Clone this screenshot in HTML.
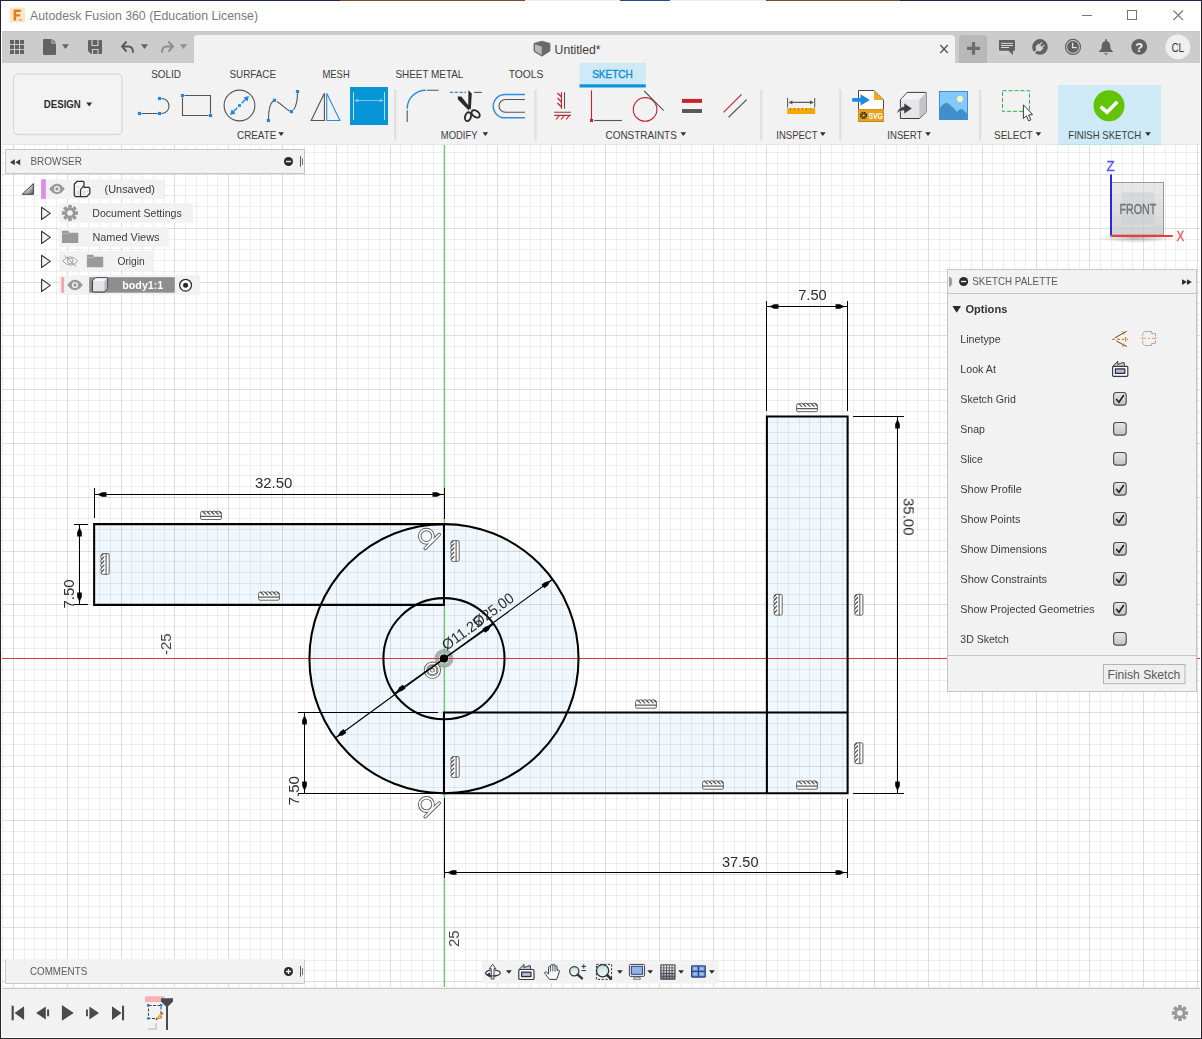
<!DOCTYPE html>
<html><head><meta charset="utf-8"><title>Autodesk Fusion 360 (Education License)</title>
<style>
html,body{margin:0;padding:0;background:#2b2230;overflow:hidden}
svg{display:block;font-family:"Liberation Sans",sans-serif}
text{white-space:pre}
</style></head><body>
<svg width="1202" height="1039" viewBox="0 0 1202 1039">
<rect x="0" y="0" width="1202" height="1039" fill="#2a2130"/>
<rect x="0" y="0" width="1202" height="1" fill="#1e2740"/><rect x="340" y="0" width="185" height="1" fill="#7a4a34"/><rect x="525" y="0" width="95" height="1" fill="#eeeeee"/><rect x="620" y="0" width="50" height="1" fill="#1f4f90"/><rect x="670" y="0" width="96" height="1" fill="#eeeeee"/><rect x="766" y="0" width="134" height="1" fill="#7a4a34"/>
<rect x="1" y="1" width="1200" height="1037" fill="#f2f2f2"/>
<g id="titlebar">
<rect x="1" y="1" width="1200" height="30" fill="#ffffff"/>
<rect x="9.5" y="7.5" width="15.5" height="15" fill="#fde6cc"/>
<path d="M13.6 9.6h7.2v2.4h-4.6v2.3h3.9v2.3h-3.9v4h-2.6z" fill="#e57f1c"/>
<rect x="18.6" y="19.2" width="3.6" height="1.5" fill="#f0a860"/>
<text x="30" y="20" font-size="13" fill="#7a7a7a" textLength="228" lengthAdjust="spacingAndGlyphs" >Autodesk Fusion 360 (Education License)</text>
<path d="M1082 15.5H1092" stroke="#777" stroke-width="1"/>
<rect x="1127.5" y="10.5" width="9" height="9" fill="none" stroke="#777" stroke-width="1"/>
<path d="M1173.5 10.5L1183 20M1183 10.5L1173.5 20" stroke="#777" stroke-width="1.1"/>
</g>
<g id="qat">
<rect x="1" y="31" width="1200" height="32" fill="#cccccc"/><rect x="1" y="31" width="1200" height="1" fill="#c7c7c7"/>
<path d="M194 63V38.5a3.5 3.5 0 0 1 3.5-3.5H951.5a3.5 3.5 0 0 1 3.5 3.5V63z" fill="#f2f2f2"/>
<path d="M10 40h4v4h-4zM10 45h4v4h-4zM10 50h4v4h-4zM15 40h4v4h-4zM15 45h4v4h-4zM15 50h4v4h-4zM20 40h4v4h-4zM20 45h4v4h-4zM20 50h4v4h-4z" fill="#626262"/>
<path d="M44 39h7.5v4.5h4.5V54a1 1 0 0 1 -1 1H44a1 1 0 0 1 -1 -1V40a1 1 0 0 1 1 -1zM52.5 39.3L55.8 42.6H52.5z" fill="#626262"/>
<path d="M62 44.3h7l-3.5 4.6z" fill="#626262"/>
<path d="M89 40h12a1 1 0 0 1 1 1v12a1 1 0 0 1 -1 1H91l-3-3V41a1 1 0 0 1 1 -1z" fill="#626262"/>
<path d="M92 40v5.5h6V40M92.5 54v-4.5h5.5V54" stroke="#cccccc" stroke-width="1.2" fill="none"/>
<path d="M126.5 41.5L122 46.5L126.5 51.5M122.5 46.5H128.5Q133 46.5 133 52.8" stroke="#5a5a5a" stroke-width="1.9" fill="none"/>
<path d="M141 44.3h7l-3.5 4.6z" fill="#626262"/>
<path d="M168.5 41.5L173 46.5L168.5 51.5M172.5 46.5H166.5Q162 46.5 162 52.8" stroke="#8e8e8e" stroke-width="1.9" fill="none"/>
<path d="M180 44.3h7l-3.5 4.6z" fill="#8e8e8e"/>
<path d="M534 43.4L541.9 41.2L550 43.4V51L541.9 56.2L534 51.4z" fill="#696969" stroke="#696969" stroke-width="0.8" stroke-linejoin="round"/>
<path d="M535 44.3L541.7 46.5V55L535 50.9z" fill="#b8b8b8"/>
<text x="554.6" y="54" font-size="12.5" fill="#3c3c3c" textLength="46" lengthAdjust="spacingAndGlyphs" >Untitled*</text>
<path d="M940.3 45L947.8 53M947.8 45L940.3 53" stroke="#555" stroke-width="1.3"/>
<path d="M959 63V39a4 4 0 0 1 4-4H983a4 4 0 0 1 4 4V63z" fill="#b8b8b8"/>
<path d="M967 48.4H980M973.5 42V54.8" stroke="#6e6e6e" stroke-width="3.2"/>
<path d="M999 51.6h9v3.4h-9z" fill="#d2d2d2"/>
<path d="M1000 40h14a1 1 0 0 1 1 1V49.8a1 1 0 0 1 -1 1h-1v4.2L1008.6 50.8H1000a1 1 0 0 1 -1 -1V41a1 1 0 0 1 1 -1z" fill="#606060"/>
<path d="M1001 43.4H1013M1001 45.5H1013M1001 47.5H1009" stroke="#dadada" stroke-width="1"/>
<circle cx="1040" cy="46.9" r="7.8" fill="#606060"/>
<g transform="translate(1040 46.9) rotate(-45)" fill="#cfcfcf" stroke="none"><path d="M1.4 -3.4V3.4H-1.2A3.4 3.4 0 0 1 -1.2 -3.4z"/><rect x="1" y="-2.3" width="3.6" height="1.2"/><rect x="1" y="1.1" width="3.6" height="1.2"/><rect x="-9" y="-0.7" width="5" height="1.4"/></g>
<circle cx="1073" cy="46.9" r="7.5" fill="none" stroke="#606060" stroke-width="1.2"/>
<circle cx="1073" cy="46.9" r="5.9" fill="#606060"/>
<path d="M1072.6 42.8V47.6H1076.8" stroke="#e2e2e2" stroke-width="1.3" fill="none"/>
<path d="M1105.2 39.2h1.6v1.7c2.5 0.6 3.5 2.7 3.5 5.2 0 2.6 0.7 4 2.7 5.3v0.6h-14v-0.6c2-1.3 2.7-2.7 2.7-5.3 0-2.5 1-4.6 3.5-5.2zM1103.8 53.2h4.4l-2.2 1.8z" fill="#606060"/>
<circle cx="1139.2" cy="46.9" r="7.9" fill="#606060"/>
<text x="1139.2" y="51.6" font-size="13" font-weight="bold" fill="#f2f2f2" text-anchor="middle">?</text>
<circle cx="1177.9" cy="46.9" r="12.4" fill="#efefef"/>
<text x="1171.4" y="52" font-size="12.5" fill="#3a3a3a" textLength="12.8" lengthAdjust="spacingAndGlyphs" >CL</text>
</g>
<g id="toolbar">
<text x="151.2" y="78.2" font-size="11" fill="#3c3c3c" textLength="29.8" lengthAdjust="spacingAndGlyphs" >SOLID</text>
<text x="229.5" y="78.2" font-size="11" fill="#3c3c3c" textLength="46.5" lengthAdjust="spacingAndGlyphs" >SURFACE</text>
<text x="322.5" y="78.2" font-size="11" fill="#3c3c3c" textLength="27.2" lengthAdjust="spacingAndGlyphs" >MESH</text>
<text x="395.5" y="78.2" font-size="11" fill="#3c3c3c" textLength="67.8" lengthAdjust="spacingAndGlyphs" >SHEET METAL</text>
<text x="508.7" y="78.2" font-size="11" fill="#3c3c3c" textLength="34.8" lengthAdjust="spacingAndGlyphs" >TOOLS</text>
<rect x="579.5" y="63" width="66.3" height="21.5" fill="#cdeaf6"/>
<rect x="579.5" y="84.3" width="66.3" height="3.2" fill="#0a94d8"/>
<text x="592.2" y="78.1" font-size="11" fill="#0a8ad6" textLength="40.6" lengthAdjust="spacingAndGlyphs" stroke="#0a8ad6" stroke-width="0.35">SKETCH</text>
<rect x="13.5" y="74" width="108.5" height="60.5" rx="4.5" fill="#f3f3f3" stroke="#dadada" stroke-width="1.3"/>
<text x="43.8" y="108.3" font-size="11" fill="#2e2e2e" textLength="37" lengthAdjust="spacingAndGlyphs" font-weight="bold" >DESIGN</text>
<path d="M86.3 102.6h5.8l-2.9 3.8z" fill="#2e2e2e"/>
<text x="237" y="138.8" font-size="11" fill="#3c3c3c" textLength="39.3" lengthAdjust="spacingAndGlyphs" >CREATE</text>
<path d="M278.3 132.3h5.6l-2.8 3.8z" fill="#2e2e2e"/>
<text x="440.8" y="138.8" font-size="11" fill="#3c3c3c" textLength="36.8" lengthAdjust="spacingAndGlyphs" >MODIFY</text>
<path d="M482.6 132.3h5.6l-2.8 3.8z" fill="#2e2e2e"/>
<text x="605.5" y="138.8" font-size="11" fill="#3c3c3c" textLength="71.3" lengthAdjust="spacingAndGlyphs" >CONSTRAINTS</text>
<path d="M680.5 132.3h5.6l-2.8 3.8z" fill="#2e2e2e"/>
<text x="776.3" y="138.8" font-size="11" fill="#3c3c3c" textLength="41.2" lengthAdjust="spacingAndGlyphs" >INSPECT</text>
<path d="M820 132.3h5.6l-2.8 3.8z" fill="#2e2e2e"/>
<text x="887.3" y="138.8" font-size="11" fill="#3c3c3c" textLength="35" lengthAdjust="spacingAndGlyphs" >INSERT</text>
<path d="M925.2 132.3h5.6l-2.8 3.8z" fill="#2e2e2e"/>
<text x="994" y="138.8" font-size="11" fill="#3c3c3c" textLength="38.7" lengthAdjust="spacingAndGlyphs" >SELECT</text>
<path d="M1035.6 132.3h5.6l-2.8 3.8z" fill="#2e2e2e"/>
<rect x="1058" y="85" width="103" height="60" fill="#cdeaf6"/>
<text x="1068.3" y="138.8" font-size="11" fill="#3c3c3c" textLength="72.8" lengthAdjust="spacingAndGlyphs" >FINISH SKETCH</text>
<path d="M1145.2 132.3h5.6l-2.8 3.8z" fill="#2e2e2e"/>
<rect x="394.3" y="89.5" width="2" height="51" fill="#dedede"/>
<rect x="534.6" y="89.5" width="2" height="51" fill="#dedede"/>
<rect x="760.3" y="89.5" width="2" height="51" fill="#dedede"/>
<rect x="839.3" y="89.5" width="2" height="51" fill="#dedede"/>
<rect x="979.2" y="89.5" width="2" height="51" fill="#dedede"/>
<path d="M141.5 113.5H157.5M161.5 98.5A7.5 7.5 0 0 1 161.5 113.5" stroke="#555555" stroke-width="1.1" fill="none"/>
<rect x="137.9" y="111.9" width="3.2" height="3.2" fill="#1e88e5"/><rect x="157.9" y="111.9" width="3.2" height="3.2" fill="#1e88e5"/><rect x="157.9" y="96.9" width="3.2" height="3.2" fill="#1e88e5"/>
<path d="M184.5 95.5H210.5V113.5M208.5 115.5H182.5V97.5" stroke="#555555" stroke-width="1.1" fill="none"/>
<rect x="180.9" y="93.9" width="3.2" height="3.2" fill="#1e88e5"/><rect x="208.9" y="113.9" width="3.2" height="3.2" fill="#1e88e5"/>
<circle cx="239.5" cy="105.5" r="15.4" stroke="#555555" stroke-width="1.1" fill="none"/>
<path d="M232.5 112.5L237.3 107.7M241.7 103.3L246.5 98.5" stroke="#1e88e5" stroke-width="1.4"/>
<path d="M230.2 115.1L231.6 109.6L235.6 113.6zM248.9 96L247.5 101.5L243.5 97.5z" fill="#1e88e5"/>
<rect x="238.1" y="104.1" width="2.8" height="2.8" fill="#1e88e5"/>
<path d="M268.4 119C268.6 110 270 103.5 273 101.2M277 101.5C282 104.5 285.5 109 289.6 111M293.5 110C296.3 106 297.4 100 297.5 93.5" stroke="#555555" stroke-width="1.1" fill="none"/>
<rect x="266.79999999999995" y="118.9" width="3.2" height="3.2" fill="#1e88e5"/><rect x="272.9" y="98.7" width="3.2" height="3.2" fill="#1e88e5"/><rect x="289.79999999999995" y="110.0" width="3.2" height="3.2" fill="#1e88e5"/><rect x="295.9" y="90.0" width="3.2" height="3.2" fill="#1e88e5"/>
<path d="M324.4 93.2V120.5H311.2z" stroke="#555555" stroke-width="1.1" fill="none"/>
<path d="M326.7 93.2V120.5H339.9z" stroke="#2a8de0" stroke-width="1.1" fill="none"/>
<rect x="350" y="87" width="38" height="38" fill="#0696d7"/>
<path d="M353.5 92V120M384.5 92V120" stroke="#b6dcf2" stroke-width="1"/>
<path d="M356 100.5H382" stroke="#7cc6ee" stroke-width="1"/>
<path d="M354.2 100.5L358.2 98.5V102.5zM383.8 100.5L379.8 98.5V102.5z" fill="#7cc6ee"/>
<path d="M407.2 108.7A18.6 18.6 0 0 1 425.8 90.2" stroke="#2a8de0" stroke-width="1.4" fill="none"/>
<path d="M407.2 110.2V121.9M427 90.2H438.7" stroke="#555555" stroke-width="1.1" fill="none"/>
<path d="M450 92.4H466" stroke="#2a8de0" stroke-width="1.2" stroke-dasharray="3.2 1.6" fill="none"/>
<path d="M474.2 92.4H481.8" stroke="#555555" stroke-width="1.1" fill="none"/>
<path d="M468.4 90.3L471.8 93.6L470.8 109.5L468.2 110.5zM457.8 96.6L461.4 96.6L470.6 108.2L469 110.8L457.9 99.6z" fill="#2a2a2a"/>
<ellipse cx="468" cy="116.7" rx="2.9" ry="4.5" transform="rotate(15 468 116.7)" fill="none" stroke="#2a2a2a" stroke-width="1.9"/>
<ellipse cx="475.7" cy="113.9" rx="2.9" ry="4.6" transform="rotate(-52 475.7 113.9)" fill="none" stroke="#2a2a2a" stroke-width="1.9"/>
<circle cx="469.6" cy="110" r="1" fill="#f2f2f2"/>
<path d="M524.9 94.5H504.9A11.65 11.65 0 0 0 504.9 117.8H524.9" stroke="#2a8de0" stroke-width="1.4" fill="none"/>
<path d="M524.9 99.5H505.4A6.4 6.4 0 0 0 505.4 112.3H524.9" stroke="#555555" stroke-width="1.1" fill="none"/>
<path d="M564.5 92.2V108.8M554.2 112.3H570.9" stroke="#555555" stroke-width="1.1" fill="none"/>
<path d="M561.5 92.2V108.8M561.5 97L557.5 93M561.5 102L557.5 98M561.5 107L557.5 103M554.2 115.4H570.9M559.5 115.4L556 119.5M564.5 115.4L561 119.5M569.5 115.4L566 119.5" stroke="#cc2229" stroke-width="1.1" fill="none"/>
<path d="M591.5 90.4V119" stroke="#cc2229" stroke-width="1.1"/>
<rect x="590.0" y="119.0" width="3.0" height="3.0" fill="#cc2229"/>
<path d="M594.2 120.5H621.9" stroke="#555555" stroke-width="1.1"/>
<circle cx="645.1" cy="109.4" r="11.8" stroke="#cc2229" stroke-width="1.1" fill="none"/>
<path d="M644.2 91L663.7 110.6" stroke="#555555" stroke-width="1.1"/>
<rect x="681.5" y="98.4" width="21" height="5" fill="#fafafa"/><rect x="681.5" y="108.5" width="21" height="5" fill="#fafafa"/>
<rect x="682" y="98.9" width="20" height="4" fill="#cc2229"/><rect x="682" y="109" width="20" height="4" fill="#5a5a5a"/>
<path d="M723.5 112.4L741.6 94.4" stroke="#cc2229" stroke-width="1.2"/>
<path d="M728.6 117.3L746.6 99.6" stroke="#555555" stroke-width="1.2"/>
<rect x="787.2" y="108.2" width="27.9" height="5.8" fill="#f9a800"/>
<path d="M790.5 108.2v2.2M794.5 108.2v1.6M798.5 108.2v2.2M802.5 108.2v1.6M806.5 108.2v2.2M810.5 108.2v1.6" stroke="#8a6a10" stroke-width="0.8"/>
<path d="M787.6 98V107.4M814.7 98V107.4M790 102.4H812.4" stroke="#5c5c5c" stroke-width="1.1"/>
<path d="M788.4 102.4L792.4 100.2V104.6zM813.9 102.4L809.9 100.2V104.6z" fill="#5c5c5c"/>
<path d="M858.5 90.5H874L883.5 100V121.5H858.5z" fill="#fff" stroke="#4a4a4a" stroke-width="1"/>
<path d="M874 90.5V100H883.5z" fill="#f0a820"/>
<rect x="858" y="109" width="26" height="12.7" fill="#e8a21a"/>
<rect x="858.4" y="109.4" width="25.2" height="11.9" fill="none" stroke="#c98a10" stroke-width="0.6"/>
<circle cx="863.6" cy="115.4" r="3" fill="none" stroke="#1a1a1a" stroke-width="1.2" stroke-dasharray="1.6 0.75"/>
<circle cx="863.6" cy="115.4" r="1.9" fill="none" stroke="#1a1a1a" stroke-width="0.9"/>
<text x="868.4" y="119.2" font-size="9.5" font-weight="bold" fill="#fff" textLength="14.6" lengthAdjust="spacingAndGlyphs">SVG</text>
<path d="M852.2 98H860.5V94.2L869.8 99.9L860.5 105.5V101.7H852.2z" fill="#1e88e5"/>
<path d="M900.4 99.8L907.2 92.4H926V112.4L919.4 118.5H900.4z" fill="#e6e6e8" stroke="#3a3a3a" stroke-width="1" stroke-linejoin="round"/>
<path d="M919.4 99.8L926 92.6V112.2L919.4 118.2z" fill="#c3c5cb"/>
<path d="M900.9 99.6L907.4 92.9H925.4L919.2 99.6z" fill="#f4f4f4"/>
<path d="M896.4 113.4Q899 107 904 106.6V103L912.2 108.4L904 114V110.6Q900 110.4 896.4 113.4z" fill="#3b3e44" stroke="#f2f2f2" stroke-width="0.5"/>
<rect x="939.5" y="91.5" width="28" height="28" fill="#84c9fc" stroke="#3d8fd0" stroke-width="1"/>
<path d="M940 119V108Q945 101 949 104Q953 107 957 112Q960 108 963 109.5L967 114V119z" fill="#4190cc"/>
<circle cx="960" cy="99" r="3" fill="#fdf7b4"/>
<rect x="1002.5" y="90.7" width="27" height="20.6" fill="none" stroke="#2bb24c" stroke-width="1" stroke-dasharray="4 2"/>
<path d="M1023.4 104.8V118.6L1026.4 115.8L1028.6 120.8L1030.8 119.8L1028.6 115L1032.6 114.6z" fill="#fff" stroke="#3a3a3a" stroke-width="1" stroke-linejoin="round"/>
<circle cx="1109" cy="105.8" r="15.5" fill="#61c405"/>
<path d="M1100.6 106.6L1107 112.2L1117.4 101.8" stroke="#fff" stroke-width="3.6" fill="none"/>
<rect x="1" y="144" width="1200" height="1" fill="#000" fill-opacity="0.05"/>
</g>
<g id="canvas">
<rect x="1" y="145" width="1200" height="842" fill="#ffffff"/>
<g fill="#f0f8fd">
<circle cx="443.97" cy="658.68" r="134.55"/>
<rect x="94.14" y="524.13" width="349.83" height="80.73"/>
<rect x="443.97" y="712.5" width="403.65" height="80.73"/>
<rect x="766.89" y="416.49" width="80.73" height="376.74"/>
</g>
<path d="M2.5 145V987M24.5 145V987M34.5 145V987M45.5 145V987M56.5 145V987M78.5 145V987M88.5 145V987M99.5 145V987M110.5 145V987M131.5 145V987M142.5 145V987M153.5 145V987M164.5 145V987M185.5 145V987M196.5 145V987M207.5 145V987M217.5 145V987M239.5 145V987M250.5 145V987M260.5 145V987M271.5 145V987M293.5 145V987M304.5 145V987M314.5 145V987M325.5 145V987M347.5 145V987M357.5 145V987M368.5 145V987M379.5 145V987M400.5 145V987M411.5 145V987M422.5 145V987M433.5 145V987M454.5 145V987M465.5 145V987M476.5 145V987M487.5 145V987M508.5 145V987M519.5 145V987M530.5 145V987M540.5 145V987M562.5 145V987M573.5 145V987M583.5 145V987M594.5 145V987M616.5 145V987M626.5 145V987M637.5 145V987M648.5 145V987M670.5 145V987M680.5 145V987M691.5 145V987M702.5 145V987M723.5 145V987M734.5 145V987M745.5 145V987M756.5 145V987M777.5 145V987M788.5 145V987M799.5 145V987M809.5 145V987M831.5 145V987M842.5 145V987M853.5 145V987M863.5 145V987M885.5 145V987M896.5 145V987M906.5 145V987M917.5 145V987M939.5 145V987M949.5 145V987M960.5 145V987M971.5 145V987M992.5 145V987M1003.5 145V987M1014.5 145V987M1025.5 145V987M1046.5 145V987M1057.5 145V987M1068.5 145V987M1079.5 145V987M1100.5 145V987M1111.5 145V987M1122.5 145V987M1132.5 145V987M1154.5 145V987M1165.5 145V987M1175.5 145V987M1186.5 145V987" stroke="#000" stroke-opacity="0.062" fill="none" shape-rendering="crispEdges"/>
<path d="M1 152.5H1201M1 163.5H1201M1 185.5H1201M1 195.5H1201M1 206.5H1201M1 217.5H1201M1 239.5H1201M1 249.5H1201M1 260.5H1201M1 271.5H1201M1 292.5H1201M1 303.5H1201M1 314.5H1201M1 325.5H1201M1 346.5H1201M1 357.5H1201M1 368.5H1201M1 378.5H1201M1 400.5H1201M1 411.5H1201M1 422.5H1201M1 432.5H1201M1 454.5H1201M1 465.5H1201M1 475.5H1201M1 486.5H1201M1 508.5H1201M1 518.5H1201M1 529.5H1201M1 540.5H1201M1 561.5H1201M1 572.5H1201M1 583.5H1201M1 594.5H1201M1 615.5H1201M1 626.5H1201M1 637.5H1201M1 648.5H1201M1 669.5H1201M1 680.5H1201M1 691.5H1201M1 701.5H1201M1 723.5H1201M1 734.5H1201M1 744.5H1201M1 755.5H1201M1 777.5H1201M1 787.5H1201M1 798.5H1201M1 809.5H1201M1 831.5H1201M1 841.5H1201M1 852.5H1201M1 863.5H1201M1 884.5H1201M1 895.5H1201M1 906.5H1201M1 917.5H1201M1 938.5H1201M1 949.5H1201M1 960.5H1201M1 970.5H1201" stroke="#000" stroke-opacity="0.062" fill="none" shape-rendering="crispEdges"/>
<path d="M13.5 145V987M67.5 145V987M121.5 145V987M174.5 145V987M228.5 145V987M282.5 145V987M336.5 145V987M390.5 145V987M443.5 145V987M497.5 145V987M551.5 145V987M605.5 145V987M659.5 145V987M713.5 145V987M766.5 145V987M820.5 145V987M874.5 145V987M928.5 145V987M982.5 145V987M1036.5 145V987M1089.5 145V987M1143.5 145V987M1197.5 145V987" stroke="#000" stroke-opacity="0.125" fill="none" shape-rendering="crispEdges"/>
<path d="M1 174.5H1201M1 228.5H1201M1 282.5H1201M1 335.5H1201M1 389.5H1201M1 443.5H1201M1 497.5H1201M1 551.5H1201M1 604.5H1201M1 658.5H1201M1 712.5H1201M1 766.5H1201M1 820.5H1201M1 874.5H1201M1 927.5H1201M1 981.5H1201" stroke="#000" stroke-opacity="0.125" fill="none" shape-rendering="crispEdges"/>
<circle cx="443.97" cy="658.4799999999999" r="9.5" fill="#a9afb3"/>
<circle cx="443.97" cy="658.4799999999999" r="5.2" fill="#fff" fill-opacity="0.5"/>
<path d="M1 658.5H1201" stroke="#d83a3a" shape-rendering="crispEdges"/>
<path d="M444.5 145V987" stroke="#5ad65a" shape-rendering="crispEdges"/>
<g stroke="#000" stroke-width="2.05" fill="none" stroke-linecap="square">
<circle cx="443.97" cy="658.68" r="134.55"/>
<circle cx="443.97" cy="658.68" r="60.55"/>
<path d="M443.97 524.13H94.14V604.86H443.97V524.13"/>
<path d="M443.97 712.5H847.62M443.97 712.5V793.23H847.62V416.49H766.89V793.23"/>
</g>
<g transform="translate(200 510.3)" fill="#fff" stroke="#5c5c5c" stroke-width="0.95" stroke-linejoin="round" stroke-linecap="round"><path d="M0.6 2.8Q0.6 0.9 2.4 0.9L3.4 1.5 5.6 0.7 7.6 1.5 9.8 0.7 11.8 1.5 14 0.7 16 1.5 18.2 0.7 19.8 1.3Q21.4 1.6 21.4 3.4V8Q21.4 9.2 20 9.2H2Q0.6 9.2 0.6 8z"/><path d="M0.8 6.1H21.2" fill="none" stroke-width="1.1"/><path d="M2.9 1.5L5.6 3.9M7.1 1.5L9.8 3.9M11.3 1.5L14 3.9M15.5 1.5L18.2 3.9M19.4 1.5L21 3" fill="none" stroke-width="1.25" stroke="#505050"/></g>
<g transform="translate(258 591)" fill="#fff" stroke="#5c5c5c" stroke-width="0.95" stroke-linejoin="round" stroke-linecap="round"><path d="M0.6 2.8Q0.6 0.9 2.4 0.9L3.4 1.5 5.6 0.7 7.6 1.5 9.8 0.7 11.8 1.5 14 0.7 16 1.5 18.2 0.7 19.8 1.3Q21.4 1.6 21.4 3.4V8Q21.4 9.2 20 9.2H2Q0.6 9.2 0.6 8z"/><path d="M0.8 6.1H21.2" fill="none" stroke-width="1.1"/><path d="M2.9 1.5L5.6 3.9M7.1 1.5L9.8 3.9M11.3 1.5L14 3.9M15.5 1.5L18.2 3.9M19.4 1.5L21 3" fill="none" stroke-width="1.25" stroke="#505050"/></g>
<g transform="translate(635 699)" fill="#fff" stroke="#5c5c5c" stroke-width="0.95" stroke-linejoin="round" stroke-linecap="round"><path d="M0.6 2.8Q0.6 0.9 2.4 0.9L3.4 1.5 5.6 0.7 7.6 1.5 9.8 0.7 11.8 1.5 14 0.7 16 1.5 18.2 0.7 19.8 1.3Q21.4 1.6 21.4 3.4V8Q21.4 9.2 20 9.2H2Q0.6 9.2 0.6 8z"/><path d="M0.8 6.1H21.2" fill="none" stroke-width="1.1"/><path d="M2.9 1.5L5.6 3.9M7.1 1.5L9.8 3.9M11.3 1.5L14 3.9M15.5 1.5L18.2 3.9M19.4 1.5L21 3" fill="none" stroke-width="1.25" stroke="#505050"/></g>
<g transform="translate(702 780)" fill="#fff" stroke="#5c5c5c" stroke-width="0.95" stroke-linejoin="round" stroke-linecap="round"><path d="M0.6 2.8Q0.6 0.9 2.4 0.9L3.4 1.5 5.6 0.7 7.6 1.5 9.8 0.7 11.8 1.5 14 0.7 16 1.5 18.2 0.7 19.8 1.3Q21.4 1.6 21.4 3.4V8Q21.4 9.2 20 9.2H2Q0.6 9.2 0.6 8z"/><path d="M0.8 6.1H21.2" fill="none" stroke-width="1.1"/><path d="M2.9 1.5L5.6 3.9M7.1 1.5L9.8 3.9M11.3 1.5L14 3.9M15.5 1.5L18.2 3.9M19.4 1.5L21 3" fill="none" stroke-width="1.25" stroke="#505050"/></g>
<g transform="translate(796 780)" fill="#fff" stroke="#5c5c5c" stroke-width="0.95" stroke-linejoin="round" stroke-linecap="round"><path d="M0.6 2.8Q0.6 0.9 2.4 0.9L3.4 1.5 5.6 0.7 7.6 1.5 9.8 0.7 11.8 1.5 14 0.7 16 1.5 18.2 0.7 19.8 1.3Q21.4 1.6 21.4 3.4V8Q21.4 9.2 20 9.2H2Q0.6 9.2 0.6 8z"/><path d="M0.8 6.1H21.2" fill="none" stroke-width="1.1"/><path d="M2.9 1.5L5.6 3.9M7.1 1.5L9.8 3.9M11.3 1.5L14 3.9M15.5 1.5L18.2 3.9M19.4 1.5L21 3" fill="none" stroke-width="1.25" stroke="#505050"/></g>
<g transform="translate(796 402.5)" fill="#fff" stroke="#5c5c5c" stroke-width="0.95" stroke-linejoin="round" stroke-linecap="round"><path d="M0.6 2.8Q0.6 0.9 2.4 0.9L3.4 1.5 5.6 0.7 7.6 1.5 9.8 0.7 11.8 1.5 14 0.7 16 1.5 18.2 0.7 19.8 1.3Q21.4 1.6 21.4 3.4V8Q21.4 9.2 20 9.2H2Q0.6 9.2 0.6 8z"/><path d="M0.8 6.1H21.2" fill="none" stroke-width="1.1"/><path d="M2.9 1.5L5.6 3.9M7.1 1.5L9.8 3.9M11.3 1.5L14 3.9M15.5 1.5L18.2 3.9M19.4 1.5L21 3" fill="none" stroke-width="1.25" stroke="#505050"/></g>
<g transform="translate(100 575) rotate(-90)" fill="#fff" stroke="#5c5c5c" stroke-width="0.95" stroke-linejoin="round" stroke-linecap="round"><path d="M0.6 2.8Q0.6 0.9 2.4 0.9L3.4 1.5 5.6 0.7 7.6 1.5 9.8 0.7 11.8 1.5 14 0.7 16 1.5 18.2 0.7 19.8 1.3Q21.4 1.6 21.4 3.4V8Q21.4 9.2 20 9.2H2Q0.6 9.2 0.6 8z"/><path d="M0.8 6.1H21.2" fill="none" stroke-width="1.1"/><path d="M2.9 1.5L5.6 3.9M7.1 1.5L9.8 3.9M11.3 1.5L14 3.9M15.5 1.5L18.2 3.9M19.4 1.5L21 3" fill="none" stroke-width="1.25" stroke="#505050"/></g>
<g transform="translate(450 562) rotate(-90)" fill="#fff" stroke="#5c5c5c" stroke-width="0.95" stroke-linejoin="round" stroke-linecap="round"><path d="M0.6 2.8Q0.6 0.9 2.4 0.9L3.4 1.5 5.6 0.7 7.6 1.5 9.8 0.7 11.8 1.5 14 0.7 16 1.5 18.2 0.7 19.8 1.3Q21.4 1.6 21.4 3.4V8Q21.4 9.2 20 9.2H2Q0.6 9.2 0.6 8z"/><path d="M0.8 6.1H21.2" fill="none" stroke-width="1.1"/><path d="M2.9 1.5L5.6 3.9M7.1 1.5L9.8 3.9M11.3 1.5L14 3.9M15.5 1.5L18.2 3.9M19.4 1.5L21 3" fill="none" stroke-width="1.25" stroke="#505050"/></g>
<g transform="translate(450 778) rotate(-90)" fill="#fff" stroke="#5c5c5c" stroke-width="0.95" stroke-linejoin="round" stroke-linecap="round"><path d="M0.6 2.8Q0.6 0.9 2.4 0.9L3.4 1.5 5.6 0.7 7.6 1.5 9.8 0.7 11.8 1.5 14 0.7 16 1.5 18.2 0.7 19.8 1.3Q21.4 1.6 21.4 3.4V8Q21.4 9.2 20 9.2H2Q0.6 9.2 0.6 8z"/><path d="M0.8 6.1H21.2" fill="none" stroke-width="1.1"/><path d="M2.9 1.5L5.6 3.9M7.1 1.5L9.8 3.9M11.3 1.5L14 3.9M15.5 1.5L18.2 3.9M19.4 1.5L21 3" fill="none" stroke-width="1.25" stroke="#505050"/></g>
<g transform="translate(773 615.7) rotate(-90)" fill="#fff" stroke="#5c5c5c" stroke-width="0.95" stroke-linejoin="round" stroke-linecap="round"><path d="M0.6 2.8Q0.6 0.9 2.4 0.9L3.4 1.5 5.6 0.7 7.6 1.5 9.8 0.7 11.8 1.5 14 0.7 16 1.5 18.2 0.7 19.8 1.3Q21.4 1.6 21.4 3.4V8Q21.4 9.2 20 9.2H2Q0.6 9.2 0.6 8z"/><path d="M0.8 6.1H21.2" fill="none" stroke-width="1.1"/><path d="M2.9 1.5L5.6 3.9M7.1 1.5L9.8 3.9M11.3 1.5L14 3.9M15.5 1.5L18.2 3.9M19.4 1.5L21 3" fill="none" stroke-width="1.25" stroke="#505050"/></g>
<g transform="translate(853.7 615.7) rotate(-90)" fill="#fff" stroke="#5c5c5c" stroke-width="0.95" stroke-linejoin="round" stroke-linecap="round"><path d="M0.6 2.8Q0.6 0.9 2.4 0.9L3.4 1.5 5.6 0.7 7.6 1.5 9.8 0.7 11.8 1.5 14 0.7 16 1.5 18.2 0.7 19.8 1.3Q21.4 1.6 21.4 3.4V8Q21.4 9.2 20 9.2H2Q0.6 9.2 0.6 8z"/><path d="M0.8 6.1H21.2" fill="none" stroke-width="1.1"/><path d="M2.9 1.5L5.6 3.9M7.1 1.5L9.8 3.9M11.3 1.5L14 3.9M15.5 1.5L18.2 3.9M19.4 1.5L21 3" fill="none" stroke-width="1.25" stroke="#505050"/></g>
<g transform="translate(853.7 764.2) rotate(-90)" fill="#fff" stroke="#5c5c5c" stroke-width="0.95" stroke-linejoin="round" stroke-linecap="round"><path d="M0.6 2.8Q0.6 0.9 2.4 0.9L3.4 1.5 5.6 0.7 7.6 1.5 9.8 0.7 11.8 1.5 14 0.7 16 1.5 18.2 0.7 19.8 1.3Q21.4 1.6 21.4 3.4V8Q21.4 9.2 20 9.2H2Q0.6 9.2 0.6 8z"/><path d="M0.8 6.1H21.2" fill="none" stroke-width="1.1"/><path d="M2.9 1.5L5.6 3.9M7.1 1.5L9.8 3.9M11.3 1.5L14 3.9M15.5 1.5L18.2 3.9M19.4 1.5L21 3" fill="none" stroke-width="1.25" stroke="#505050"/></g>
<g fill="none" stroke="#5c5c5c" stroke-width="3.5" stroke-linecap="round"><circle cx="426.4" cy="536.2" r="6.7"/><path d="M425.2 548.4000000000001L439.2 534.6"/></g>
<g fill="none" stroke="#fff" stroke-width="1.7" stroke-linecap="round"><circle cx="426.4" cy="536.2" r="6.7"/><path d="M425.2 548.4000000000001L439.2 534.6"/></g>
<g fill="none" stroke="#5c5c5c" stroke-width="3.5" stroke-linecap="round"><circle cx="426.4" cy="804.5" r="6.7"/><path d="M425.2 816.7L439.2 802.9"/></g>
<g fill="none" stroke="#fff" stroke-width="1.7" stroke-linecap="round"><circle cx="426.4" cy="804.5" r="6.7"/><path d="M425.2 816.7L439.2 802.9"/></g>
<g fill="none" stroke="#5c5c5c" stroke-width="3.4"><circle cx="432.4" cy="670.2" r="6.9"/><circle cx="432.4" cy="670.2" r="3.2"/></g>
<g fill="none" stroke="#fff" stroke-width="1.7"><circle cx="432.4" cy="670.2" r="6.9"/><circle cx="432.4" cy="670.2" r="3.2"/></g>
<path d="M94.5 488V518M444.5 488V518.5M94 494.5H445M74 524.5H88M74 604.5H88M79.5 524V605M298 712.5H438M298 793.5H441M304.5 712V794M444.5 798V878M847.5 799V878M444 872.5H848M853 416.5H904M853 793.5H904M897.5 416V794M766.5 301V411M847.5 301V411M766 306.5H848" stroke="#000" fill="none" shape-rendering="crispEdges"/>
<path d="M552.62 579.31L335.32 738.05" stroke="#000" stroke-width="1.1" fill="none"/>
<path d="M493.57 623.95L394.37 693.41" stroke="#000" stroke-width="1.1" fill="none"/>
<path d="M94.50 494.50L99.00 493.70L102.00 492.20L106.50 492.20L106.50 496.80L102.00 496.80L99.00 495.30zM444.50 494.50L440.00 495.30L437.00 496.80L432.50 496.80L432.50 492.20L437.00 492.20L440.00 493.70zM79.50 524.50L80.30 529.00L81.80 532.00L81.80 536.50L77.20 536.50L77.20 532.00L78.70 529.00zM79.50 604.50L78.70 600.00L77.20 597.00L77.20 592.50L81.80 592.50L81.80 597.00L80.30 600.00zM304.50 712.50L305.30 717.00L306.80 720.00L306.80 724.50L302.20 724.50L302.20 720.00L303.70 717.00zM304.50 793.50L303.70 789.00L302.20 786.00L302.20 781.50L306.80 781.50L306.80 786.00L305.30 789.00zM444.50 872.50L449.00 871.70L452.00 870.20L456.50 870.20L456.50 874.80L452.00 874.80L449.00 873.30zM847.50 872.50L843.00 873.30L840.00 874.80L835.50 874.80L835.50 870.20L840.00 870.20L843.00 871.70zM897.50 416.50L898.30 421.00L899.80 424.00L899.80 428.50L895.20 428.50L895.20 424.00L896.70 421.00zM897.50 793.50L896.70 789.00L895.20 786.00L895.20 781.50L899.80 781.50L899.80 786.00L898.30 789.00zM766.50 306.50L771.00 305.70L774.00 304.20L778.50 304.20L778.50 308.80L774.00 308.80L771.00 307.30zM847.50 306.50L843.00 307.30L840.00 308.80L835.50 308.80L835.50 304.20L840.00 304.20L843.00 305.70zM552.62 579.31L549.45 582.61L547.92 585.59L544.28 588.24L541.57 584.53L545.20 581.88L548.51 581.32zM335.32 738.05L338.49 734.75L340.02 731.77L343.66 729.12L346.37 732.83L342.74 735.48L339.43 736.04zM493.57 623.95L490.34 627.19L488.75 630.14L485.06 632.72L482.42 628.95L486.11 626.37L489.42 625.88zM394.37 693.41L397.60 690.17L399.19 687.22L402.88 684.64L405.52 688.41L401.83 690.99L398.52 691.48z" fill="#000"/>
<g opacity="0.99">
<text x="255" y="488" font-size="15" fill="#2a2a2a" textLength="37.4" lengthAdjust="spacingAndGlyphs" >32.50</text>
<text x="798.2" y="300.4" font-size="15" fill="#2a2a2a" textLength="28.5" lengthAdjust="spacingAndGlyphs" >7.50</text>
<text x="722" y="866.7" font-size="15" fill="#2a2a2a" textLength="36.5" lengthAdjust="spacingAndGlyphs" >37.50</text>
<text transform="translate(74.4 608.5) rotate(-90)" font-size="15" fill="#2a2a2a">7.50</text>
<text transform="translate(298.5 805.3) rotate(-90)" font-size="15" fill="#2a2a2a">7.50</text>
<text transform="translate(903.6 498) rotate(90)" font-size="15" fill="#2a2a2a">35.00</text>
<text transform="translate(446.4 651) rotate(-36)" font-size="15" fill="#2a2a2a" textLength="46.5" lengthAdjust="spacingAndGlyphs">Ø11.25</text>
<text transform="translate(477.5 627.8) rotate(-36)" font-size="15" fill="#2a2a2a" textLength="46.5" lengthAdjust="spacingAndGlyphs">Ø25.00</text>
<text transform="translate(171 655) rotate(-90)" font-size="15" fill="#444">-25</text>
<text transform="translate(459 947) rotate(-90)" font-size="15" fill="#444">25</text>
</g>
<circle cx="443.97" cy="658.4799999999999" r="4.1" fill="#000"/>
</g>
<g id="bottombar">
<rect x="1" y="988" width="1200" height="50" fill="#f2f2f2"/>
<rect x="1" y="988" width="1200" height="1" fill="#c6c6c6"/>
<path d="M11.6 1005.8h2.2v14.5h-2.2zM14.6 1013L24.1 1006.2V1020zM36.1 1013L45.8 1006.6V1019.4zM47.1 1009.6h2v6.7h-2zM61.9 1005L73.7 1012.9L61.9 1020.8zM86 1009.6h1.9v6.7H86zM89.4 1006.6L99 1013L89.4 1019.4zM112 1006.2L121.5 1013L112 1020zM122 1005.8h2.1v14.5H122z" fill="#4a4a4c"/>
<rect x="145.1" y="996.3" width="19.6" height="5.8" fill="#f9b0b4"/>
<rect x="148.5" y="1005.5" width="12.5" height="13" fill="none" stroke="#444" stroke-width="1" stroke-dasharray="3 1.5"/>
<rect x="147" y="1004" width="2.4" height="2.4" fill="#1e88e5"/><rect x="160" y="1004" width="2.4" height="2.4" fill="#1e88e5"/><rect x="147" y="1017.2" width="2.4" height="2.4" fill="#1e88e5"/>
<path d="M155.6 1019.8L156.6 1017.4L160.8 1013L162.6 1014.6L158.2 1019z" fill="#f2b03a"/>
<path d="M160.6 1013.2L161.8 1012L163.4 1013.6L162.4 1014.8z" fill="#e84040"/>
<path d="M155.4 1020.2L156.4 1017.8L157.8 1019.2z" fill="#444"/>
<path d="M161 998.3H173V1001.6L168 1006.6V1030H166V1006.6L161 1001.6z" fill="#4a4a4c"/>
<path d="M148 1029H156V1023.3" stroke="#c8c8c8" stroke-width="1.6" fill="none"/>
<g fill="#999999"><circle cx="1179.9" cy="1013" r="5.4"/><rect x="1171.8500000000001" y="1011.2" width="16.1" height="3.6" transform="rotate(0.0 1179.9 1013)"/><rect x="1171.8500000000001" y="1011.2" width="16.1" height="3.6" transform="rotate(45.0 1179.9 1013)"/><rect x="1171.8500000000001" y="1011.2" width="16.1" height="3.6" transform="rotate(90.0 1179.9 1013)"/><rect x="1171.8500000000001" y="1011.2" width="16.1" height="3.6" transform="rotate(135.0 1179.9 1013)"/></g><circle cx="1179.9" cy="1013" r="2.8" fill="#f2f2f2"/>
</g>
<g id="browser">
<rect x="5.5" y="149.5" width="299" height="24" fill="#f2f2f2" stroke="#c6c6c6"/>
<path d="M10 162.2L14.8 159.2V165.2zM15.4 162.2L20.2 159.2V165.2z" fill="#3a3a3a"/>
<text x="30.4" y="164.8" font-size="11" fill="#5a5a5a" textLength="51.5" lengthAdjust="spacingAndGlyphs" >BROWSER</text>
<circle cx="288.5" cy="161.5" r="4.5" fill="#2a2a2a"/><rect x="285.9" y="160.8" width="5.2" height="1.4" fill="#f2f2f2"/>
<path d="M300.5 156.2V166.8" stroke="#555" stroke-width="1"/><path d="M302.5 158.3V164.8" stroke="#777" stroke-width="1"/>
<rect x="45.8" y="179.3" width="118.6" height="19.6" fill="#f2f2f2"/>
<rect x="41.1" y="179.3" width="4.7" height="19.6" fill="#e08be6"/>
<defs><linearGradient id="tg" x1="0" y1="0" x2="1" y2="1"><stop offset="0.4" stop-color="#e8e8e8"/><stop offset="1" stop-color="#555"/></linearGradient></defs>
<path d="M33.3 183.6V194.3H22.2z" fill="url(#tg)" stroke="#3a3a3a" stroke-width="1" stroke-linejoin="round"/>
<path d="M49.2 189Q57 178.6 64.8 189Q57 199.4 49.2 189z" fill="#9a9a9a"/>
<circle cx="57" cy="189" r="3.1" fill="#f2f2f2"/><circle cx="57" cy="189" r="1.7" fill="#9a9a9a"/>
<path d="M74.3 184.3L77.3 181.3H83L84 182.3V187.3H88.8L89.8 188.3V193.5L86.8 196.5H75.5L74.3 195.5z" fill="#fafafc" stroke="#2e3238" stroke-width="1.25" stroke-linejoin="round"/>
<path d="M75.6 185.4h3.8v3.2h-3.8zM75.6 190.4h3.8v5h-3.8zM81.8 190.6h4v4.8h-4z" fill="#e2e4ea"/><path d="M81.4 186.4l1.8-2v3zM87.2 192.6l1.6-1.8v-1.8l-1.6 1.4z" fill="#d6d8e0"/>
<path d="M80.5 189.6V196.3M80.5 189.6L83.8 185.9" fill="none" stroke="#2e3238" stroke-width="1.2"/>
<text x="104.5" y="193.4" font-size="11.5" fill="#3c3c3c" textLength="50.5" lengthAdjust="spacingAndGlyphs" >(Unsaved)</text>
<rect x="59" y="203.2" width="134" height="19.6" fill="#f2f2f2"/>
<path d="M41.6 207.2V219.5L50.3 213.35z" fill="#f4f4f4" stroke="#333" stroke-width="1.1" stroke-linejoin="round"/>
<g fill="#999999"><circle cx="69.95" cy="213" r="5.4"/><rect x="61.900000000000006" y="211.2" width="16.1" height="3.6" transform="rotate(0.0 69.95 213)"/><rect x="61.900000000000006" y="211.2" width="16.1" height="3.6" transform="rotate(45.0 69.95 213)"/><rect x="61.900000000000006" y="211.2" width="16.1" height="3.6" transform="rotate(90.0 69.95 213)"/><rect x="61.900000000000006" y="211.2" width="16.1" height="3.6" transform="rotate(135.0 69.95 213)"/></g><circle cx="69.95" cy="213" r="2.8" fill="#f2f2f2"/>
<text x="92.3" y="217.2" font-size="11.5" fill="#3c3c3c" textLength="89.4" lengthAdjust="spacingAndGlyphs" >Document Settings</text>
<rect x="59" y="227.2" width="110" height="19.6" fill="#f2f2f2"/>
<path d="M41.6 231.2V243.5L50.3 237.35z" fill="#f4f4f4" stroke="#333" stroke-width="1.1" stroke-linejoin="round"/>
<path d="M62 231.5a0.8 0.8 0 0 1 0.8 -0.8h5.4l1 2h9.1v10.4H62z" fill="#9a9a9a"/>
<path d="M62.3 233.39999999999998H69" stroke="#c9c9c9" stroke-width="0.7"/>
<text x="92.4" y="241.2" font-size="11.5" fill="#3c3c3c" textLength="67.1" lengthAdjust="spacingAndGlyphs" >Named Views</text>
<rect x="59" y="251.2" width="94.6" height="19.6" fill="#f2f2f2"/>
<path d="M41.6 255.2V267.5L50.3 261.34999999999997z" fill="#f4f4f4" stroke="#333" stroke-width="1.1" stroke-linejoin="round"/>
<path d="M62.6 261Q70.2 252.6 77.8 261Q70.2 269.4 62.6 261z" fill="none" stroke="#a6a6a6" stroke-width="1"/><circle cx="70.2" cy="261" r="2.8" fill="none" stroke="#a6a6a6" stroke-width="1"/><path d="M64.6 255.6L76.2 266.6" stroke="#999" stroke-width="1"/>
<path d="M86.9 255.60000000000002a0.8 0.8 0 0 1 0.8 -0.8h5.4l1 2h9.1v10.4H86.9z" fill="#9a9a9a"/>
<path d="M87.2 257.5H93.9" stroke="#c9c9c9" stroke-width="0.7"/>
<text x="117.4" y="265" font-size="11.5" fill="#3c3c3c" textLength="27.4" lengthAdjust="spacingAndGlyphs" >Origin</text>
<rect x="59" y="275.2" width="140.7" height="19.6" fill="#f2f2f2"/>
<path d="M41.6 279.2V291.5L50.3 285.34999999999997z" fill="#f4f4f4" stroke="#333" stroke-width="1.1" stroke-linejoin="round"/>
<rect x="61.2" y="277.2" width="2.9" height="15.5" fill="#f4a6ac"/>
<path d="M67.2 285Q75 274.6 82.8 285Q75 295.4 67.2 285z" fill="#9a9a9a"/>
<circle cx="75" cy="285" r="3.1" fill="#f2f2f2"/><circle cx="75" cy="285" r="1.7" fill="#9a9a9a"/>
<rect x="89.1" y="277.2" width="85.7" height="15.5" fill="#8e8e8e"/>
<path d="M92.4 281.2l3-3.4h11.2a1 1 0 0 1 1 1v9.6l-3.2 3.6H93.4a1 1 0 0 1 -1 -1z" fill="#e4e4e8" stroke="#333" stroke-width="1" stroke-linejoin="round"/>
<path d="M104.4 281.4l2.8-3v9.8l-2.8 3.2z" fill="#b9bbc3"/><path d="M93 281l2.6-2.8h11l-2.6 2.8z" fill="#f8f8f8"/>
<text x="122.3" y="289" font-size="11.5" fill="#ffffff" textLength="41" lengthAdjust="spacingAndGlyphs" font-weight="bold" >body1:1</text>
<circle cx="185.6" cy="285.2" r="5.9" fill="#fdfdfd" stroke="#2a2a2a" stroke-width="1.2"/><circle cx="185.6" cy="285.2" r="2.5" fill="#2a2a2a"/>
</g>
<g id="comments">
<rect x="5" y="959.2" width="299.5" height="24.3" fill="#f2f2f2"/><path d="M5.5 959.5V983.5H304.5V959.5" fill="none" stroke="#c9c9c9"/>
<text x="30" y="975.2" font-size="11" fill="#5a5a5a" textLength="57.2" lengthAdjust="spacingAndGlyphs" >COMMENTS</text>
<circle cx="288.5" cy="971.5" r="4.5" fill="#2a2a2a"/><path d="M285.9 971.5h5.2M288.5 968.9v5.2" stroke="#f2f2f2" stroke-width="1.3"/>
<path d="M300.5 966V976.7" stroke="#555" stroke-width="1"/><path d="M302.5 968V975" stroke="#777" stroke-width="1"/>
</g>
<g id="viewcube">
<defs><linearGradient id="vc" x1="0" y1="0" x2="0" y2="1"><stop offset="0" stop-color="#d8d8d8" stop-opacity="0.55"/><stop offset="1" stop-color="#c4c4c6" stop-opacity="0.75"/></linearGradient>
<radialGradient id="vsh" cx="0.5" cy="0.5" r="0.5"><stop offset="0" stop-color="#000" stop-opacity="0.28"/><stop offset="1" stop-color="#000" stop-opacity="0"/></radialGradient></defs>
<ellipse cx="1136" cy="238" rx="38" ry="5" fill="url(#vsh)"/>
<rect x="1111.5" y="182.5" width="52" height="52.5" fill="url(#vc)" stroke="#9a9a9a" stroke-width="1"/>
<rect x="1121.3" y="192" width="32.7" height="32.6" fill="#c6c8cf" fill-opacity="0.4"/>
<text x="1119.4" y="213.8" font-size="15.2" fill="#6c7078" textLength="37" lengthAdjust="spacingAndGlyphs" stroke="#6c7078" stroke-width="0.35">FRONT</text>
<path d="M1111 174.5V237" stroke="#2828ee" stroke-width="2"/>
<path d="M1111 236H1172.8" stroke="#ee3a3a" stroke-width="2.2"/>
<rect x="1110" y="235" width="2" height="2" fill="#8a9a20"/>
<text x="1106.4" y="170.7" font-size="14.8" fill="#5050f5" textLength="8.2" lengthAdjust="spacingAndGlyphs" stroke="#5050f5" stroke-width="0.3">Z</text>
<text x="1176.4" y="240.7" font-size="14.8" fill="#f05050" textLength="7.8" lengthAdjust="spacingAndGlyphs" stroke="#f05050" stroke-width="0.3">X</text>
</g>
<g id="palette">
<rect x="947.5" y="269.5" width="249" height="422" fill="#f2f2f2" stroke="#c6c6c6"/>
<path d="M948 293.5H1196M948 655.5H1196" stroke="#c6c6c6"/>
<path d="M950 277V286.5" stroke="#444" stroke-width="1"/><path d="M951.6 278.5V285" stroke="#999" stroke-width="1"/>
<circle cx="963.6" cy="281.5" r="4.5" fill="#2a2a2a"/><rect x="961" y="280.8" width="5.2" height="1.4" fill="#f2f2f2"/>
<text x="972.3" y="285.1" font-size="11" fill="#5a5a5a" textLength="85.4" lengthAdjust="spacingAndGlyphs" >SKETCH PALETTE</text>
<path d="M1182.1 279.2L1186.9 282.1L1182.1 285zM1187 279.2L1191.8 282.1L1187 285z" fill="#2a2a2a"/>
<path d="M952.4 306H961L956.7 312.8z" fill="#2a2a2a"/>
<text x="965.4" y="313.4" font-size="11.5" fill="#333" textLength="42" lengthAdjust="spacingAndGlyphs" font-weight="bold" >Options</text>
<defs><linearGradient id="cb" x1="0" y1="0" x2="0" y2="1"><stop offset="0" stop-color="#e6e6e6"/><stop offset="1" stop-color="#c4c4c4"/></linearGradient></defs>
<text x="960.3" y="343.1" font-size="11.3" fill="#3a3a3a" textLength="40.4" lengthAdjust="spacingAndGlyphs" >Linetype</text>
<text x="960.3" y="373.1" font-size="11.3" fill="#3a3a3a" textLength="35.6" lengthAdjust="spacingAndGlyphs" >Look At</text>
<text x="960.3" y="403.1" font-size="11.3" fill="#3a3a3a" textLength="55.6" lengthAdjust="spacingAndGlyphs" >Sketch Grid</text>
<rect x="1113.6" y="392.5" width="12.6" height="12.6" rx="2.8" fill="url(#cb)" stroke="#4a4a4a" stroke-width="1.1"/>
<path d="M1116.2 399.0L1119 402.2L1123.8 395.0" fill="none" stroke="#1a1a1a" stroke-width="1.5"/>
<text x="960.3" y="433.1" font-size="11.3" fill="#3a3a3a" textLength="24.6" lengthAdjust="spacingAndGlyphs" >Snap</text>
<rect x="1113.6" y="422.5" width="12.6" height="12.6" rx="2.8" fill="url(#cb)" stroke="#4a4a4a" stroke-width="1.1"/>
<text x="960.3" y="463.1" font-size="11.3" fill="#3a3a3a" textLength="22.5" lengthAdjust="spacingAndGlyphs" >Slice</text>
<rect x="1113.6" y="452.5" width="12.6" height="12.6" rx="2.8" fill="url(#cb)" stroke="#4a4a4a" stroke-width="1.1"/>
<text x="960.3" y="493.1" font-size="11.3" fill="#3a3a3a" textLength="61.5" lengthAdjust="spacingAndGlyphs" >Show Profile</text>
<rect x="1113.6" y="482.5" width="12.6" height="12.6" rx="2.8" fill="url(#cb)" stroke="#4a4a4a" stroke-width="1.1"/>
<path d="M1116.2 489.0L1119 492.2L1123.8 485.0" fill="none" stroke="#1a1a1a" stroke-width="1.5"/>
<text x="960.3" y="523.1" font-size="11.3" fill="#3a3a3a" textLength="60" lengthAdjust="spacingAndGlyphs" >Show Points</text>
<rect x="1113.6" y="512.5" width="12.6" height="12.6" rx="2.8" fill="url(#cb)" stroke="#4a4a4a" stroke-width="1.1"/>
<path d="M1116.2 519.0L1119 522.2L1123.8 515.0" fill="none" stroke="#1a1a1a" stroke-width="1.5"/>
<text x="960.3" y="553.1" font-size="11.3" fill="#3a3a3a" textLength="86.7" lengthAdjust="spacingAndGlyphs" >Show Dimensions</text>
<rect x="1113.6" y="542.5" width="12.6" height="12.6" rx="2.8" fill="url(#cb)" stroke="#4a4a4a" stroke-width="1.1"/>
<path d="M1116.2 549.0L1119 552.2L1123.8 545.0" fill="none" stroke="#1a1a1a" stroke-width="1.5"/>
<text x="960.3" y="583.1" font-size="11.3" fill="#3a3a3a" textLength="86.7" lengthAdjust="spacingAndGlyphs" >Show Constraints</text>
<rect x="1113.6" y="572.5" width="12.6" height="12.6" rx="2.8" fill="url(#cb)" stroke="#4a4a4a" stroke-width="1.1"/>
<path d="M1116.2 579.0L1119 582.2L1123.8 575.0" fill="none" stroke="#1a1a1a" stroke-width="1.5"/>
<text x="960.3" y="613.1" font-size="11.3" fill="#3a3a3a" textLength="134.3" lengthAdjust="spacingAndGlyphs" >Show Projected Geometries</text>
<rect x="1113.6" y="602.5" width="12.6" height="12.6" rx="2.8" fill="url(#cb)" stroke="#4a4a4a" stroke-width="1.1"/>
<path d="M1116.2 609.0L1119 612.2L1123.8 605.0" fill="none" stroke="#1a1a1a" stroke-width="1.5"/>
<text x="960.3" y="643.1" font-size="11.3" fill="#3a3a3a" textLength="48.5" lengthAdjust="spacingAndGlyphs" >3D Sketch</text>
<rect x="1113.6" y="632.5" width="12.6" height="12.6" rx="2.8" fill="url(#cb)" stroke="#4a4a4a" stroke-width="1.1"/>
<path d="M1114.9 337.8L1126.8 331.2M1116.4 341.1L1126.8 346.5" fill="none" stroke="#4a4a4a" stroke-width="1"/>
<path d="M1112 339.4h3M1117 339.4h3M1122 339.4h2.2M1127 339.4h1M1125.6 337v4.6M1122.6 331.2l1.6 3M1122.6 346.8l1.6 -3" stroke="#e87a20" stroke-width="1.2" fill="none"/>
<path d="M1142.7 336.6V333.4L1144.6 331.5H1151.6V333.6H1155.5V336.6M1155.5 340.4V343.4H1151.6V345.5H1144.6L1142.7 343.6V340.4" fill="none" stroke="#ababab" stroke-width="1"/>
<path d="M1141 338.4h5M1148 338.4h2M1152 338.4h5" stroke="#f0aa7c" stroke-width="1.1"/>
<g transform="translate(1112 361.2) scale(1.0)" stroke-linejoin="round"><path d="M0.7 5.2L5.8 0L5.8 3.2L8.4 2.2L12 1.2L12.5 4.6" fill="#c4c8d0" stroke="#333a44" stroke-width="1"/><rect x="0.6" y="5.1" width="15.2" height="10" rx="1" fill="#fff" stroke="#333a44" stroke-width="1.2"/><rect x="3.4" y="7.7" width="9.4" height="4.5" fill="#aab2c2" stroke="#2a303a" stroke-width="1.2"/><path d="M4.4 10h7.4" stroke="#c8cedb" stroke-width="0.8"/></g>
<rect x="1103.5" y="664.5" width="81.5" height="19.2" fill="#efefef" stroke="#b4b4b4"/>
<text x="1107.5" y="678.7" font-size="12.3" fill="#5a5a5a" textLength="72.8" lengthAdjust="spacingAndGlyphs" >Finish Sketch</text>
</g>
<g id="navbar">
<rect x="482.3" y="961" width="236.4" height="22.6" fill="#f2f2f2"/>
<path d="M490.6 970.2C487 970.8 485.4 972 485.6 973.2C486 975.2 489 976 492.6 976C496.6 976 500.2 974.8 500.2 972.8C500.2 971.6 498 970.6 494.8 970.2" fill="none" stroke="#2e3440" stroke-width="1.2"/>
<path d="M491.2 979V968.6H489.4L492.6 964.4L495.8 968.6H494V979z" fill="#fafafa" stroke="#2e3440" stroke-width="0.9" stroke-linejoin="round"/>
<path d="M488 975.4C489.4 975.8 491 976 492.6 976C494.4 976 496.2 975.8 497.6 975.2" fill="none" stroke="#2e3440" stroke-width="1.2"/>
<path d="M486 974.6L490.2 972.6V977.8z" fill="#2e3440"/>
<path d="M506 970.2h5.8l-2.9 3.6z" fill="#2a2a2a"/>
<g transform="translate(518.2 964.4) scale(1.0)" stroke-linejoin="round"><path d="M0.7 5.2L5.8 0L5.8 3.2L8.4 2.2L12 1.2L12.5 4.6" fill="#c4c8d0" stroke="#333a44" stroke-width="1"/><rect x="0.6" y="5.1" width="15.2" height="10" rx="1" fill="#fff" stroke="#333a44" stroke-width="1.2"/><rect x="3.4" y="7.7" width="9.4" height="4.5" fill="#aab2c2" stroke="#2a303a" stroke-width="1.2"/><path d="M4.4 10h7.4" stroke="#c8cedb" stroke-width="0.8"/></g>
<path d="M549.4 979.4C547.8 977.4 546 974.8 544.8 973.4C544.2 972.4 545.4 971.4 546.6 972.2L548.6 974V967.4C548.6 966 550.4 966 550.6 967.4V965.6C550.8 964.2 552.6 964.2 552.8 965.6V965.2C553 963.8 554.8 964 555 965.4V966.4C555.2 965.2 557 965.4 557 966.8V970.6C558 969.6 559.8 969.8 559.4 971.4C558.8 974 557.6 976.8 556.6 979.4z" fill="#f6f8fa" stroke="#2e3440" stroke-width="0.95" stroke-linejoin="round"/>
<path d="M550.6 967.4V971.6M552.8 965.6V971.4M555 966.4V971.6" stroke="#2e3440" stroke-width="0.8" fill="none"/>
<defs><linearGradient id="lens" x1="0" y1="0" x2="0" y2="1"><stop offset="0" stop-color="#c4dcdc"/><stop offset="1" stop-color="#f4fafa"/></linearGradient></defs>
<circle cx="574.3" cy="971.2" r="4.6" fill="url(#lens)" stroke="#2e3440" stroke-width="1.2"/><path d="M577.6 974.6L582 978.4" stroke="#2e3440" stroke-width="2.4" stroke-linecap="round"/>
<path d="M581.4 966.4H586M583.7 964.2V968.6M581.4 970.6H586" stroke="#2e3440" stroke-width="1"/>
<rect x="596.4" y="964.4" width="15.2" height="15" fill="none" stroke="#2e3440" stroke-width="1" stroke-dasharray="2.2 1.6"/>
<circle cx="602.6" cy="970.7" r="6.1" fill="url(#lens)" stroke="#2e3440" stroke-width="1.3"/><path d="M607.2 975.2L611 978.6" stroke="#2e3440" stroke-width="2.6" stroke-linecap="round"/>
<path d="M617 970.2h5.8l-2.9 3.6z" fill="#2a2a2a"/>
<rect x="629.4" y="964.4" width="15.2" height="12" rx="1.2" fill="#f0f0f0" stroke="#444" stroke-width="1"/><rect x="631.4" y="966.3" width="11.2" height="8" fill="#92b2e2" stroke="#26468a" stroke-width="1"/><path d="M634.5 977l-1 2.2h7l-1-2.2z" fill="#f4f4f4" stroke="#555" stroke-width="0.8"/>
<path d="M647.3 970.2h5.8l-2.9 3.6z" fill="#2a2a2a"/>
<defs><linearGradient id="gg" x1="0" y1="0" x2="0" y2="1"><stop offset="0" stop-color="#5a5a5e"/><stop offset="1" stop-color="#3e4046"/></linearGradient><linearGradient id="gc" x1="0" y1="0" x2="0" y2="1"><stop offset="0" stop-color="#ffffff"/><stop offset="1" stop-color="#8e94a4"/></linearGradient></defs>
<rect x="660.2" y="964.3" width="15.4" height="15.4" rx="1" fill="url(#gg)"/>
<path d="M661.50 965.60h1.8v1.8h-1.8zM661.50 968.36h1.8v1.8h-1.8zM661.50 971.12h1.8v1.8h-1.8zM661.50 973.88h1.8v1.8h-1.8zM661.50 976.64h1.8v1.8h-1.8zM664.26 965.60h1.8v1.8h-1.8zM664.26 968.36h1.8v1.8h-1.8zM664.26 971.12h1.8v1.8h-1.8zM664.26 973.88h1.8v1.8h-1.8zM664.26 976.64h1.8v1.8h-1.8zM667.02 965.60h1.8v1.8h-1.8zM667.02 968.36h1.8v1.8h-1.8zM667.02 971.12h1.8v1.8h-1.8zM667.02 973.88h1.8v1.8h-1.8zM667.02 976.64h1.8v1.8h-1.8zM669.78 965.60h1.8v1.8h-1.8zM669.78 968.36h1.8v1.8h-1.8zM669.78 971.12h1.8v1.8h-1.8zM669.78 973.88h1.8v1.8h-1.8zM669.78 976.64h1.8v1.8h-1.8zM672.54 965.60h1.8v1.8h-1.8zM672.54 968.36h1.8v1.8h-1.8zM672.54 971.12h1.8v1.8h-1.8zM672.54 973.88h1.8v1.8h-1.8zM672.54 976.64h1.8v1.8h-1.8z" fill="url(#gc)"/>
<path d="M678.2 970.2h5.8l-2.9 3.6z" fill="#2a2a2a"/>
<rect x="691" y="965.2" width="14.9" height="12.5" rx="1.4" fill="#26468a"/>
<path d="M692.4 966.6h5.4v4.2h-5.4zM699.1 966.6h5.4v4.2h-5.4zM692.4 972.1h5.4v4.2h-5.4zM699.1 972.1h5.4v4.2h-5.4z" fill="#86a8de"/>
<path d="M693.6 967.8h3v1.8h-3zM700.3 967.8h3v1.8h-3zM693.6 973.3h3v1.8h-3zM700.3 973.3h3v1.8h-3z" fill="#a6c0ea"/>
<path d="M709 970.2h5.8l-2.9 3.6z" fill="#2a2a2a"/>
</g>
<rect x="1" y="31" width="1" height="1007" fill="#ffffff"/><rect x="1200" y="31" width="1" height="1007" fill="#ffffff"/><rect x="1" y="1037" width="1200" height="1" fill="#ffffff"/>
</svg>
</body></html>
